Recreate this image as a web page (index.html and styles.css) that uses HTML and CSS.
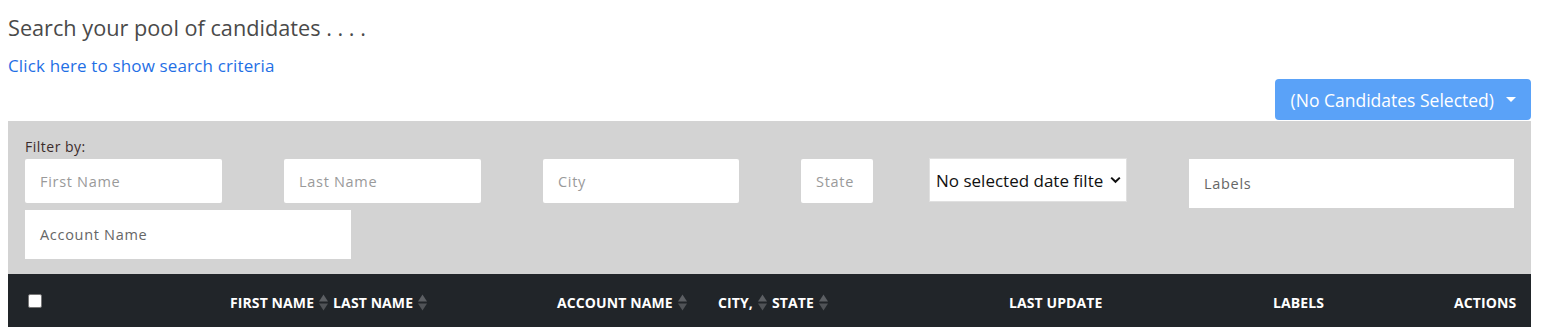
FILE: index.html
```html
<!DOCTYPE html>
<html>
<head>
<meta charset="utf-8">
<link rel="stylesheet" href="styles.css">
</head>
<body>
<div class="page">
  <h1 class="title">Search your pool of candidates . . . .</h1>
  <a class="criteria-link" href="#">Click here to show search criteria</a>
  <div class="toolbar">
    <button class="bulk-btn" type="button">(No Candidates Selected)
      <svg class="caret" width="10" height="5" viewBox="0 0 10 5"><path d="M0 0h10L5 5z" fill="#fff"/></svg>
    </button>
  </div>
  <div class="filter-panel">
    <div class="filter-label">Filter by:</div>
    <div class="filter-row">
      <input class="fi w-name" placeholder="First Name">
      <input class="fi w-name" placeholder="Last Name">
      <input class="fi w-city" placeholder="City">
      <input class="fi w-state" placeholder="State">
      <div class="select-wrap">
        <select class="date-select"><option>No selected date filter</option></select>
        <svg class="chev" width="11" height="8" viewBox="0 0 11 8"><path d="M1.2 1.6 5.5 5.8 9.8 1.6" fill="none" stroke="#111" stroke-width="2"/></svg>
      </div>
      <div class="fi-tall w-labels">Labels</div>
    </div>
    <div class="filter-row row2">
      <div class="fi-tall w-account">Account Name</div>
    </div>
  </div>
  <div class="thead">
    <div class="th th-check"><span class="cb"></span></div>
    <div class="th">FIRST NAME<svg class="sort" width="9" height="17" viewBox="0 0 9 17"><path d="M4.5 0.5 9 7.5H0z" fill="#5c5f63"/><path d="M0 9.5h9L4.5 16.5z" fill="#505357"/></svg>LAST NAME<svg class="sort" width="9" height="17" viewBox="0 0 9 17"><path d="M4.5 0.5 9 7.5H0z" fill="#5c5f63"/><path d="M0 9.5h9L4.5 16.5z" fill="#505357"/></svg></div>
    <div class="th">ACCOUNT NAME<svg class="sort" width="9" height="17" viewBox="0 0 9 17"><path d="M4.5 0.5 9 7.5H0z" fill="#5c5f63"/><path d="M0 9.5h9L4.5 16.5z" fill="#505357"/></svg></div>
    <div class="th">CITY,<svg class="sort" width="9" height="17" viewBox="0 0 9 17"><path d="M4.5 0.5 9 7.5H0z" fill="#5c5f63"/><path d="M0 9.5h9L4.5 16.5z" fill="#505357"/></svg>STATE<svg class="sort" width="9" height="17" viewBox="0 0 9 17"><path d="M4.5 0.5 9 7.5H0z" fill="#5c5f63"/><path d="M0 9.5h9L4.5 16.5z" fill="#505357"/></svg></div>
    <div class="th">LAST UPDATE</div>
    <div class="th">LABELS</div>
    <div class="th">ACTIONS</div>
  </div>
</div>
</body>
</html>
```
FILE: styles.css
```css
html, body { margin: 0; padding: 0; background: #fff; }
body { font-family: "Open Sans", "Liberation Sans", sans-serif; }
.page { padding: 0 14px 0 8px; }
.title {
  margin: 0;
  padding-top: 14px;
  font-size: 21.7px;
  font-weight: 400;
  line-height: 28px;
  color: #4a4a4a;
}
.criteria-link {
  display: block;
  margin-top: 13px;
  font-size: 17px;
  letter-spacing: 0.15px;
  line-height: 22px;
  color: #1f6fe5;
  text-decoration: none;
}
.toolbar { display: flex; justify-content: flex-end; margin-top: 2px; }
.bulk-btn {
  display: flex; align-items: center; gap: 12px;
  height: 41px;
  padding: 0 15px 0 16px;
  border: none; border-radius: 4px;
  background: #5aa2f8; color: #fff;
  font-family: "Open Sans", "Liberation Sans", sans-serif;
  font-size: 17.5px;
}
.filter-panel {
  margin-top: 1px;
  background: #d3d3d3;
  padding: 17px 17px 15px 17px;
}
.filter-label {
  font-size: 14px; line-height: 18px; color: #3b2b2b;
  letter-spacing: 0.5px;
  margin-bottom: 3px;
}
.filter-row { display: flex; align-items: flex-start; column-gap: 62px; }
.row2 { margin-top: 2px; }
.fi, .fi-tall {
  box-sizing: border-box;
  border: none; border-radius: 2px;
  background: #fff;
  padding: 0 0 0 15px;
  font-family: "Open Sans", sans-serif; font-size: 14.5px;
  letter-spacing: 0.7px;
  outline: none;
}
.fi { height: 44px; }
.fi::placeholder { color: #9a9a9a; }
.fi-tall { height: 49px; display: flex; align-items: center; color: #666; border-radius: 0; }
.w-name { width: 197px; }
.w-city { width: 196px; }
.w-state { width: 72px; }
.w-labels { width: 325px; }
.w-account { width: 326px; }
.select-wrap { position: relative; margin-left: -6px; margin-top: -1px; }
.date-select {
  appearance: none; -webkit-appearance: none;
  box-sizing: border-box;
  width: 198px; height: 44px;
  padding: 0 23px 0 6px;
  border: 1px solid #e0e0e0;
  background: #fff; color: #111;
  font-family: "Open Sans", sans-serif; font-size: 17px;
  border-radius: 0;
}
.chev { position: absolute; right: 6px; top: 18px; pointer-events: none; }
.thead {
  display: grid;
  grid-template-columns: 214px 327px 161px 291px 264px 181px 1fr;
  height: 56px;
  background: #212529;
  color: #fff;
  font-weight: 700; font-size: 14px;
  letter-spacing: 0.1px;
  align-items: center;
}
.th { display: flex; align-items: center; padding: 0 0 0 8px; white-space: nowrap; }
.th-check { padding-left: 20px; margin-top: -2px; }
.cb { width: 14px; height: 14px; background: #fff; border-radius: 2px; border: 1px solid #767676; box-sizing: border-box; }
.sort { margin: 0 5px; }
```
